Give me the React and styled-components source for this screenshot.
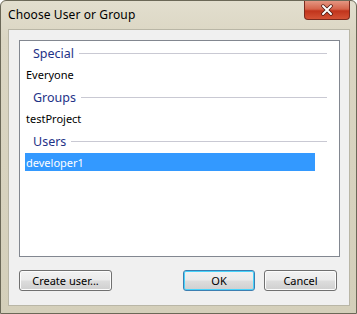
import styled, { createGlobalStyle } from "styled-components";

const GlobalStyle = createGlobalStyle`
  html, body {
    margin: 0;
    padding: 0;
    background: #ffffff;
  }
  body {
    font-family: "Noto Sans", "Open Sans", sans-serif;
  }
`;

const Frame = styled.div`
  width: 357px;
  height: 314px;
  box-sizing: border-box;
  display: flex;
  flex-direction: column;
  background: linear-gradient(180deg, #e2dece 0%, #dbd6c3 12%, #d4cfba 100%);
  border: 1px solid #6b6857;
  border-radius: 6px 6px 0 0;
  overflow: hidden;
`;

const TitleBar = styled.div`
  height: 28px;
  display: flex;
  align-items: flex-start;
  justify-content: space-between;
  padding-left: 7px;
`;

const Title = styled.span`
  margin-top: 5px;
  font-size: 12px;
  color: #000;
  letter-spacing: 0.1px;
`;

const CloseButton = styled.div`
  width: 46px;
  height: 19px;
  margin-right: 6px;
  box-sizing: border-box;
  border: 1px solid #7a2a1e;
  border-top: none;
  border-radius: 0 0 4px 4px;
  background: linear-gradient(180deg, #e49682 0%, #d5644b 45%, #c1341c 55%, #d45235 100%);
  display: flex;
  align-items: center;
  justify-content: center;
`;

const Client = styled.div`
  flex: 1;
  margin: 0 6px 7px 7px;
  background: #f0f0f0;
  border: 1px solid #b9b6a6;
  display: flex;
  flex-direction: column;
  padding: 10px 9px 0 10px;
`;

const ListBox = styled.div`
  height: 217px;
  box-sizing: border-box;
  background: #ffffff;
  border: 1px solid #828790;
  padding-top: 1px;
  font-size: 11px;
`;

const SectionHeader = styled.div`
  display: flex;
  align-items: center;
  height: 22px;
  padding: 0 12px 0 13px;
  color: #1e3287;
  font-size: 12.5px;

  & + & ,
  & ~ & {
    margin-top: 2px;
  }

  &::after {
    content: "";
    flex: 1;
    height: 1px;
    margin-left: 5px;
    background: #c9c9d3;
  }
`;

const Item = styled.div`
  height: ${(p) => (p.$selected ? 18 : 20)}px;
  margin-top: ${(p) => (p.$selected ? 1 : 0)}px;
  width: 290px;
  display: flex;
  align-items: center;
  margin-left: 5px;
  padding-left: 1px;
  box-sizing: border-box;
  color: ${(p) => (p.$selected ? "#ffffff" : "#000000")};
  background: ${(p) => (p.$selected ? "#3399ff" : "transparent")};
`;

const Footer = styled.div`
  display: flex;
  align-items: center;
  margin-top: 13px;
  padding-right: 3px;
`;

const Button = styled.button`
  height: 21px;
  width: ${(p) => p.$width}px;
  margin-left: ${(p) => p.$gap || 0}px;
  box-sizing: border-box;
  font-family: "Noto Sans", "Open Sans", sans-serif;
  font-size: 11px;
  color: #000;
  border-radius: 3px;
  border: 1px solid ${(p) => (p.$default ? "#3c7fb1" : "#707070")};
  background: linear-gradient(180deg, #f2f2f2 0%, #ebebeb 48%, #dddddd 52%, #cfcfcf 100%);
  box-shadow: ${(p) => (p.$default ? "inset 0 0 0 1px #48d3fb" : "inset 0 0 0 1px #fcfcfc")};
  padding: 0;
`;

const Spacer = styled.div`
  flex: 1;
`;

export default function App() {
  return (
    <>
      <GlobalStyle />
      <Frame>
        <TitleBar>
          <Title>Choose User or Group</Title>
          <CloseButton>
            <svg width="14" height="12" viewBox="0 0 14 12">
              <path
                d="M3 2 L11 10 M11 2 L3 10"
                stroke="#4a1a12"
                strokeWidth="3.5"
                strokeLinecap="round"
              />
              <path
                d="M3 2 L11 10 M11 2 L3 10"
                stroke="#ffffff"
                strokeWidth="2"
                strokeLinecap="round"
              />
            </svg>
          </CloseButton>
        </TitleBar>
        <Client>
          <ListBox>
            <SectionHeader>Special</SectionHeader>
            <Item>Everyone</Item>
            <SectionHeader>Groups</SectionHeader>
            <Item>testProject</Item>
            <SectionHeader>Users</SectionHeader>
            <Item $selected>developer1</Item>
          </ListBox>
          <Footer>
            <Button $width={93}>Create user...</Button>
            <Spacer />
            <Button $width={72} $default>OK</Button>
            <Button $width={73} $gap={9}>Cancel</Button>
          </Footer>
        </Client>
      </Frame>
    </>
  );
}
